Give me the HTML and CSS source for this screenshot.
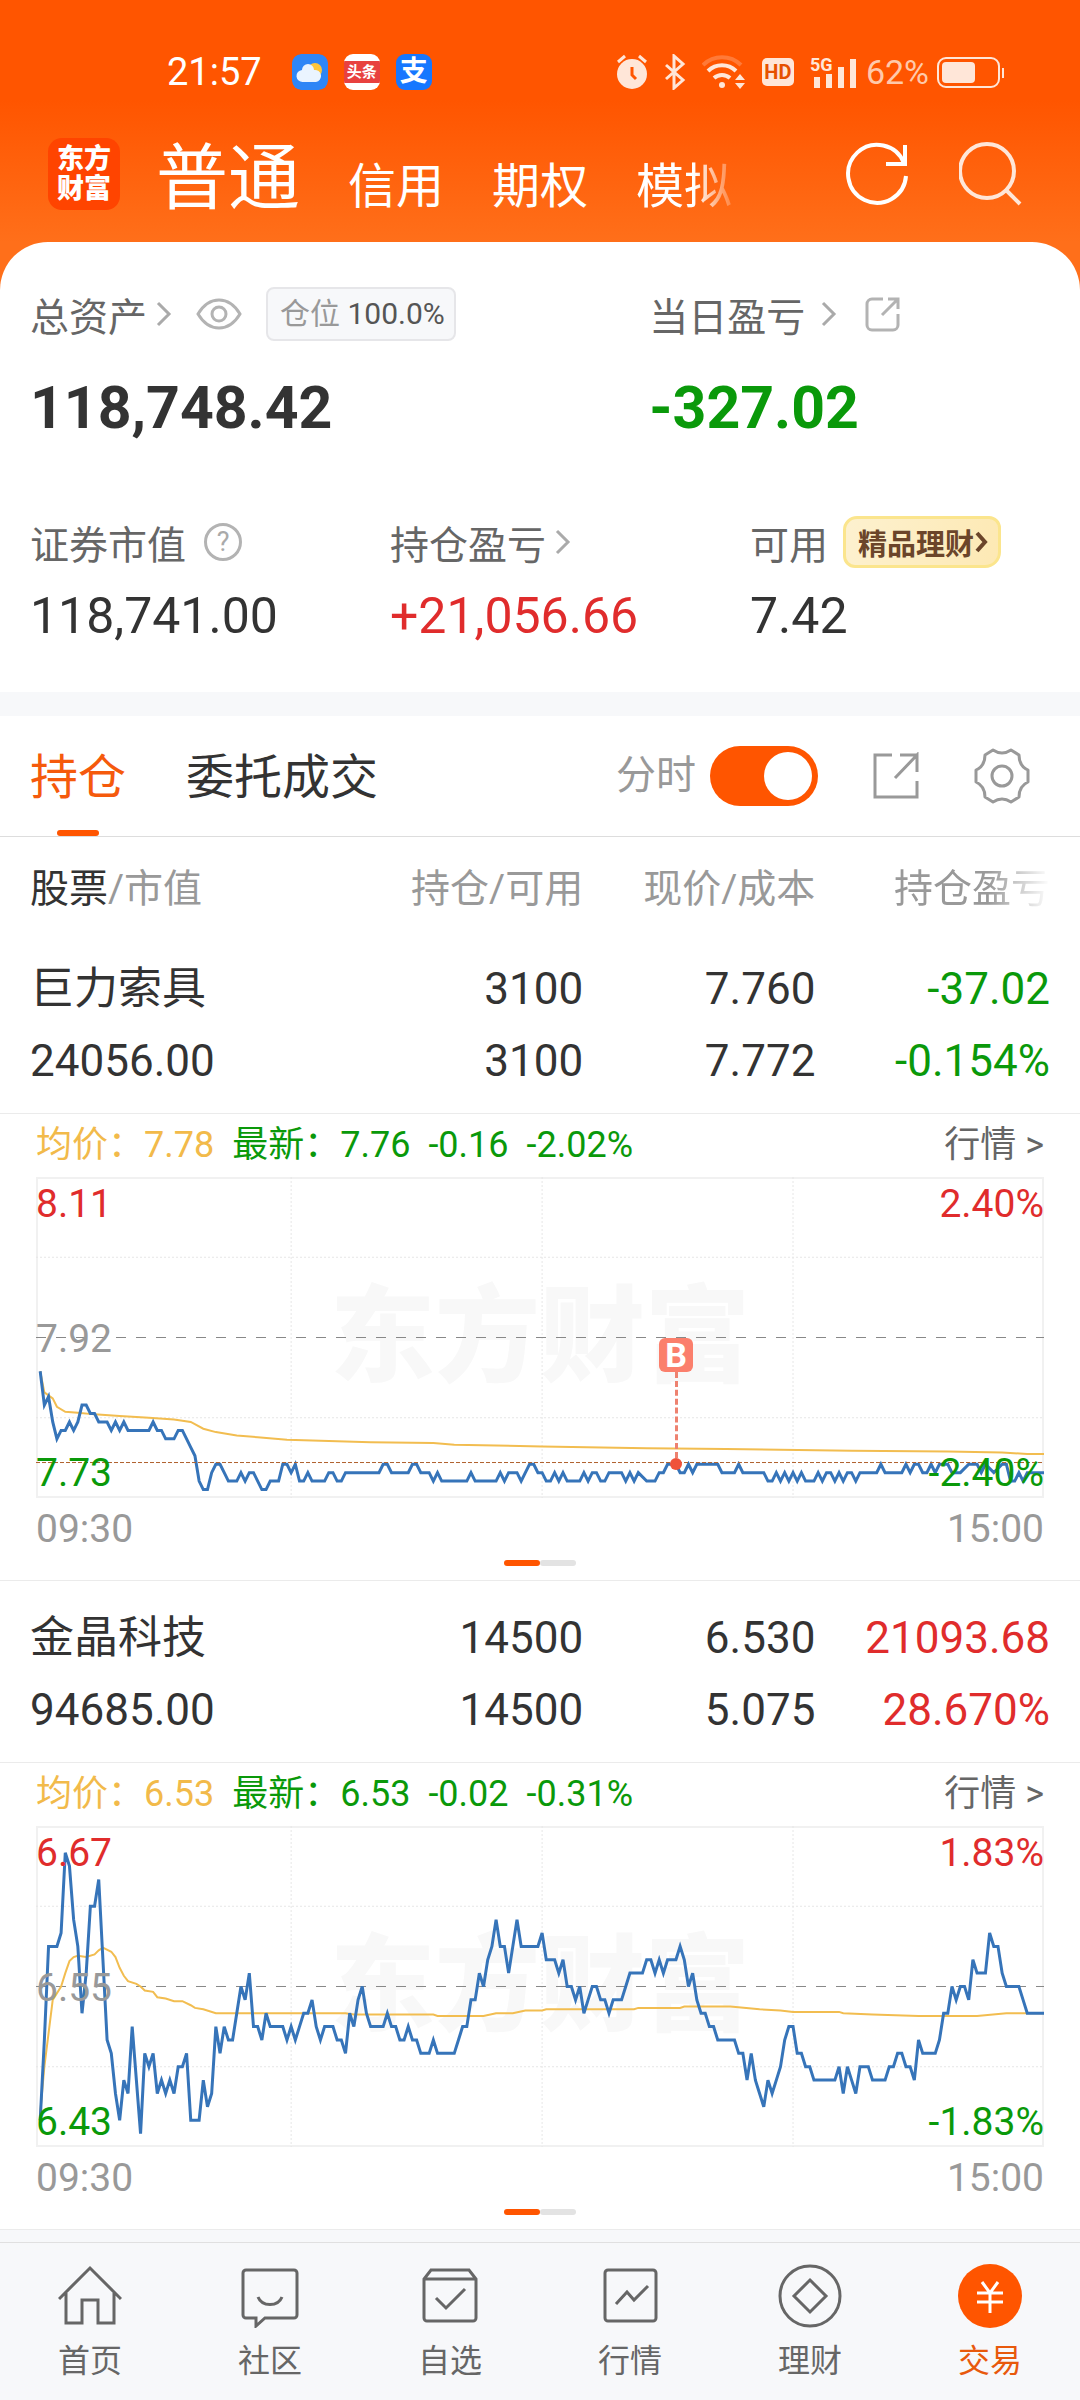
FILE: index.html
```html
<!DOCTYPE html>
<html lang="zh-CN">
<head>
    <meta charset="UTF-8">
    <meta name="viewport" content="width=device-width, initial-scale=1.0">
    <title>东方财富 - 交易</title>
    <link rel="stylesheet" href="styles.css">
</head>
<body>
    <header class="header">
        <!-- Status bar -->
        <div class="status">
            <span class="time">21:57</span>
            <div class="apps">
                <svg class="app" viewBox="0 0 36 36">
                    <rect width="36" height="36" rx="9" fill="#2f86f6"/>
                    <circle cx="23" cy="16" r="7" fill="#ffc53a"/>
                    <path d="M11 28a6 6 0 0 1-1-12 6 6 0 0 1 12 0 6 6 0 0 1 2 12z" fill="#eaf4ff"/>
                </svg>
                <span class="app app-news"><b>头条</b></span>
                <span class="app app-pay">支</span>
            </div>
            <div class="signals">
                <svg width="32" height="36" viewBox="0 0 32 36">
                    <circle cx="16" cy="20" r="15" fill="#ffe6d8"/>
                    <path d="M2 8l7-6M30 8l-7-6" stroke="#ffe6d8" stroke-width="3"/>
                    <path d="M16 13v8l4 4" fill="none" stroke="#ff5500" stroke-width="3"/>
                </svg>
                <svg width="22" height="36" viewBox="0 0 22 36">
                    <path d="M2 11l17 15-9 8V2l9 8L2 25" fill="none" stroke="#ffe6d8" stroke-width="3"/>
                </svg>
                <svg width="44" height="36" viewBox="0 0 44 36">
                    <path d="M1 11a27 27 0 0 1 38 0" fill="none" stroke="#ff7a38" stroke-width="4"/>
                    <path d="M6 17a20 20 0 0 1 28 0M12 24a12 12 0 0 1 16 0" fill="none" stroke="#ffe6d8" stroke-width="4"/>
                    <circle cx="20" cy="31" r="3" fill="#ffe6d8"/>
                    <path d="M33 26l5-6 5 6zM33 29h10l-5 6z" fill="#ffe6d8"/>
                </svg>
                <span class="hd">HD</span>
                <svg width="48" height="36" viewBox="0 0 48 36">
                    <text class="net" x="0" y="17">5G</text>
                    <path d="M7 23v11M19 20v14M31 13v21M43 5v29" stroke="#ffe6d8" stroke-width="6"/>
                </svg>
                <div class="power">
                    <span>62%</span>
                    <svg width="68" height="36" viewBox="0 0 68 36">
                        <rect x="1" y="4" width="61" height="29" rx="8" fill="none" stroke="#ffe6d8" stroke-width="2"/>
                        <rect x="5" y="8" width="33" height="21" rx="4" fill="#ffe6d8"/>
                        <path d="M66 14v10" stroke="#ffe6d8" stroke-width="2"/>
                    </svg>
                </div>
            </div>
        </div>

        <!-- Account navigation -->
        <div class="topbar">
            <a href="#" class="logo">东方<br>财富</a>
            <nav class="accounts">
                <a href="#" class="current">普通</a>
                <a href="#">信用</a>
                <a href="#">期权</a>
                <a href="#" class="faded">模拟</a>
            </nav>
            <div class="actions">
                <button type="button" aria-label="刷新">
                    <svg width="64" height="64" viewBox="0 0 64 64" fill="none" stroke="#fff" stroke-width="4">
                        <path d="M59 21A29 29 0 1 0 61 34"/>
                        <path d="M60 3v19H41"/>
                    </svg>
                </button>
                <button type="button" aria-label="搜索">
                    <svg width="64" height="64" viewBox="0 0 64 64" fill="none" stroke="#ffe6d8" stroke-width="4">
                        <circle cx="28" cy="29" r="27"/>
                        <path d="M47 48l14 14"/>
                    </svg>
                </button>
            </div>
        </div>
    </header>

    <!-- Assets -->
    <section class="assets">
        <div class="totals">
            <div class="asset">
                <div class="label">
                    <a href="#">总资产<svg class="chevron" viewBox="0 0 16 28"><path d="M2 3l11 11L2 25"/></svg></a>
                    <button type="button" class="eye" aria-label="隐藏金额">
                        <svg width="46" height="32" viewBox="0 0 46 32" fill="none" stroke="#b3b3b3" stroke-width="3">
                            <path d="M2 16C8 6 15 2 23 2s15 4 21 14c-6 10-13 14-21 14S8 26 2 16z"/>
                            <circle cx="23" cy="16" r="7"/>
                        </svg>
                    </button>
                    <span class="tag">仓位 <b>100.0%</b></span>
                </div>
                <div class="total">118,748.42</div>
            </div>
            <div class="asset">
                <div class="label">
                    <a href="#">当日盈亏<svg class="chevron wide" viewBox="0 0 16 28"><path d="M2 3l11 11L2 25"/></svg></a>
                    <button type="button" class="share" aria-label="分享">
                        <svg width="36" height="36" viewBox="0 0 36 36" fill="none" stroke="#b3b3b3" stroke-width="3">
                            <path d="M18 3H7a5 5 0 0 0-5 5v21a5 5 0 0 0 5 5h21a5 5 0 0 0 5-5V18"/>
                            <path d="M17 19L33 3M23 3h10v10"/>
                        </svg>
                    </button>
                </div>
                <div class="total green">-327.02</div>
            </div>
        </div>
        <div class="details">
            <div class="asset">
                <div class="label">
                    证券市值
                    <button type="button" class="help" aria-label="说明">?</button>
                </div>
                <div class="amount">118,741.00</div>
            </div>
            <div class="asset">
                <div class="label">
                    <a href="#">持仓盈亏<svg class="chevron" viewBox="0 0 16 28"><path d="M2 3l11 11L2 25"/></svg></a>
                </div>
                <div class="amount red">+21,056.66</div>
            </div>
            <div class="asset">
                <div class="label">
                    可用
                    <a href="#" class="promo">精品理财<svg width="14" height="24" viewBox="0 0 14 24"><path d="M3 3l8 9-8 9" fill="none" stroke="#6b452a" stroke-width="4"/></svg></a>
                </div>
                <div class="amount">7.42</div>
            </div>
        </div>
    </section>

    <!-- Holdings -->
    <section class="holdings">
        <div class="tabs">
            <a href="#" class="tab active">持仓</a>
            <a href="#" class="tab">委托成交</a>
            <div class="tools">
                <label for="minute">分时</label>
                <input type="checkbox" id="minute" class="switch" checked>
                <button type="button" aria-label="分享持仓">
                    <svg width="48" height="48" viewBox="0 0 48 48" fill="none" stroke="#999" stroke-width="3">
                        <path d="M20 3H3v42h42V29M45 20V3L23 26M28 3h17"/>
                    </svg>
                </button>
                <button type="button" class="gear" aria-label="设置">
                    <svg width="56" height="56" viewBox="0 0 56 56" fill="none" stroke="#999" stroke-width="3" stroke-linejoin="round">
                        <path d="M19 2Q28 8 37 2L45 7Q45 18 54 22V34Q45 38 45 49L37 54Q28 48 19 54L11 49Q11 38 2 34V22Q11 18 11 7Z"/>
                        <circle cx="28" cy="28" r="10"/>
                    </svg>
                </button>
            </div>
        </div>

        <table class="positions">
            <thead>
                <tr>
                    <th><b>股票</b>/市值</th>
                    <th>持仓/可用</th>
                    <th>现价/成本</th>
                    <th><span class="fade">持仓盈亏</span></th>
                </tr>
            </thead>
            <tbody>
                <tr class="stock">
                    <td>巨力索具<br>24056.00</td>
                    <td>3100<br>3100</td>
                    <td>7.760<br>7.772</td>
                    <td class="green">-37.02<br>-0.154%</td>
                </tr>
                <tr>
                    <td colspan="4" class="detail">
                        <div class="quote">
                            <span class="yellow">均价：7.78</span>
                            <span class="green">最新：7.76</span>
                            <span class="green">-0.16</span>
                            <span class="green">-2.02%</span>
                            <a href="#">行情 &gt;</a>
                        </div>
                        <div class="chart">
                            <span class="watermark">东方财富</span>
                            <svg class="plot" viewBox="0 0 241 38" preserveAspectRatio="none">
                                <path class="grid" d="M0 9.5H241M0 28.5H241M61 0V38M121 0V38M181 0V38"/>
                                <path class="middle" d="M0 19H241"/>
                                <polyline class="average" points="1,23 2,25.5 4,26.2 5,27.2 7,27.8 10,27.9 14,28.1 20,28.3 27,28.5 33,28.7 37,29 40,29.8 43,30.2 48,30.6 53,30.8 60,31.1 80,31.4 95,31.5 100,31.7 121,31.9 146,32.1 165,32.2 195,32.4 218,32.5 231,32.6 237,32.8 241,32.8"/>
                                <polyline class="price" points="1,23 2,27 3,26 4,29 5,31 6,30 7,30 8,29 9,30 10,29 11,27 12,27 13,28 14,28 15,29 17,29 18,30 19,29 20,30 21,29 22,30 27,30 28,29 29,30 30,30 31,31 33,31 34,30 35,30 36,31 37,32 38,33 39,36 40,37 41,37 42,35 43,34 44,34 45,35 46,36 48,36 49,35 50,36 51,35 52,35 53,36 54,37 55,37 56,36 58,36 59,34 60,34 61,35 62,34 63,36 64,36 65,35 66,36 69,36 70,35 71,35 72,36 73,36 74,35 82,35 83,34 84,34 85,35 89,35 90,34 91,34 92,35 94,35 95,36 96,35 97,36 103,36 104,35 105,36 110,36 111,35 112,36 113,35 115,35 116,36 117,35 118,34 119,34 120,35 121,35 122,36 123,36 124,35 125,36 126,35 127,36 130,36 131,35 132,36 133,35 134,35 135,36 136,36 137,35 140,35 141,36 142,35 143,36 144,35 146,36 148,36 149,35 150,35 151,34 153,34 154,35 155,35 156,34 157,35 158,34 163,34 164,35 167,35 168,34 169,35 174,35 175,36 176,36 177,35 178,36 179,35 180,36 181,35 182,36 183,35 184,36 186,36 187,35 188,36 189,35 190,35 191,36 192,35 193,36 194,35 195,35 196,36 197,35 201,35 202,34 203,35 207,35 208,34 209,35 210,34 211,34 212,35 213,35 214,34 215,35 216,34 218,34 219,35 221,35 223,34 225,34 226,35 227,34 229,35 231,34 232,34 233,36 234,36 235,35 236,36 237,35 241,35"/>
                                <path class="last" d="M0 33.8H241"/>
                            </svg>
                            <div class="trade"><b>B</b><i class="stem"></i><i class="dot"></i></div>
                            <div class="scale">
                                <span class="red">8.11</span><span>7.92</span><span class="green">7.73</span>
                            </div>
                            <div class="scale right">
                                <span class="red">2.40%</span><span class="green">-2.40%</span>
                            </div>
                        </div>
                        <div class="hours"><span>09:30</span><span>15:00</span></div>
                        <div class="pager"><i class="on"></i><i></i></div>
                    </td>
                </tr>
                <tr class="stock">
                    <td>金晶科技<br>94685.00</td>
                    <td>14500<br>14500</td>
                    <td>6.530<br>5.075</td>
                    <td class="red">21093.68<br>28.670%</td>
                </tr>
                <tr>
                    <td colspan="4" class="detail">
                        <div class="quote">
                            <span class="yellow">均价：6.53</span>
                            <span class="green">最新：6.53</span>
                            <span class="green">-0.02</span>
                            <span class="green">-0.31%</span>
                            <a href="#">行情 &gt;</a>
                        </div>
                        <div class="chart">
                            <span class="watermark">东方财富</span>
                            <svg class="plot" viewBox="0 0 241 24" preserveAspectRatio="none">
                                <path class="grid" d="M0 6H241M0 18H241M61 0V24M121 0V24M181 0V24"/>
                                <path class="middle" d="M0 12H241"/>
                                <polyline class="average" points="1,21.5 2,18 3,15.5 4,13 6,12 7,11 8,10.1 9,9.8 10,9.7 12,9.8 14,9.6 15,9.3 16,9.1 18,9.4 19,9.8 20,10.6 21,11.2 22,11.6 24,11.8 25,12 26,12.3 28,12.4 29,12.8 31,12.9 33,13.1 35,13.1 37,13.4 38,13.6 40,13.7 43,14 74,14 76,14.1 95,14.1 96,14.2 107,14.2 110,14 114,14 117,13.8 121,13.8 122,13.7 143,13.7 144,13.6 154,13.6 155,13.5 166,13.5 173,13.7 178,13.8 181,13.9 192,13.9 193,14 200,14.1 211,14.2 225,14.2 232,14 241,14"/>
                                <polyline class="price" points="1,22 2,16 3,9 5,9 6,8 7,2 8,3 9,7 10,9 11,14 12,11 13,6 14,6 15,4 16,10 17,16 18,17 19,20 20,22 21,19 22,20 23,15 24,19 25,23 26,17 27,18 28,17 29,20 30,19 31,20 32,19 33,20 34,18 35,18 36,17 37,22 39,22 40,19 41,21 42,20 43,15 44,17 45,15 46,16 47,16 48,14 49,12 50,13 51,11 52,15 53,15 54,16 55,14 56,15 59,15 60,16 61,15 62,16 63,15 64,14 65,14 66,13 67,15 68,16 69,15 71,15 72,16 73,16 74,17 75,14 76,15 77,13 78,12 79,14 80,15 83,15 84,14 85,15 86,15 87,16 88,16 89,15 90,16 91,16 92,17 94,17 95,16 96,17 100,17 101,16 102,15 103,15 104,13 105,13 106,11 107,12 108,10 109,9 110,7 111,9 112,9 113,11 114,9 115,7 116,9 120,9 121,8 122,10 124,10 125,11 126,10 127,12 128,12 129,13 130,12 131,14 132,13 133,12 134,12 135,13 136,13 137,14 138,13 140,13 141,12 142,11 145,11 146,10 147,10 148,11 149,10 150,11 151,10 153,10 154,9 155,10 156,12 157,11 158,13 159,14 160,14 161,15 162,15 163,16 167,16 168,17 169,17 170,19 171,17 172,19 173,20 174,21 175,19 176,20 177,19 178,18 179,16 180,15 181,15 182,17 183,17 184,18 185,18 186,19 191,19 192,18 193,20 194,18 195,19 196,20 197,18 199,18 200,19 203,19 204,18 205,18 206,17 207,17 208,18 209,18 210,19 211,16 212,17 215,17 216,16 217,14 218,14 219,12 220,13 221,12 222,12 223,13 224,10 225,11 227,11 228,8 229,9 230,9 231,11 232,12 235,12 236,13 237,14 241,14"/>
                            </svg>
                            <div class="scale">
                                <span class="red">6.67</span><span>6.55</span><span class="green">6.43</span>
                            </div>
                            <div class="scale right">
                                <span class="red">1.83%</span><span class="green">-1.83%</span>
                            </div>
                        </div>
                        <div class="hours"><span>09:30</span><span>15:00</span></div>
                        <div class="pager"><i class="on"></i><i></i></div>
                    </td>
                </tr>
            </tbody>
        </table>
    </section>

    <!-- Bottom navigation -->
    <nav class="tabbar">
        <a href="#">
            <svg viewBox="0 0 64 64"><path d="M1 35L32 4l31 31M8 29v30h16V36h16v23h16V29"/></svg>
            首页
        </a>
        <a href="#">
            <svg viewBox="0 0 64 64"><path d="M8 6h48a3 3 0 0 1 3 3v42a3 3 0 0 1-3 3H27l-9 8v-8H8a3 3 0 0 1-3-3V9a3 3 0 0 1 3-3z"/><path d="M20 33c4 10 20 10 24 0"/></svg>
            社区
        </a>
        <a href="#">
            <svg viewBox="0 0 64 64"><path d="M13 6h38l7 9v39a3 3 0 0 1-3 3H9a3 3 0 0 1-3-3V15zM6 15h52M18 34l10 10 19-19"/></svg>
            自选
        </a>
        <a href="#">
            <svg viewBox="0 0 64 64"><rect x="7" y="6" width="51" height="51" rx="3"/><path d="M18 40l11-12 7 8 14-14"/></svg>
            行情
        </a>
        <a href="#">
            <svg viewBox="0 0 64 64"><circle cx="32" cy="32" r="30"/><path d="M32 16l16 16-16 16-16-16z"/></svg>
            理财
        </a>
        <a href="#" class="active">
            <svg viewBox="0 0 64 64"><circle cx="32" cy="32" r="32" fill="#ff5500" stroke="none"/><path d="M24 18l8 11 8-11M19 29h26M19 38h26M32 29v20" stroke="#fff"/></svg>
            交易
        </a>
    </nav>
</body>
</html>
```
FILE: styles.css
```css
/* Basic reset and styles */
* {
    margin: 0;
    padding: 0;
    box-sizing: border-box;
}

body {
    font-family: Roboto, "Noto Sans CJK SC", sans-serif;
    color: #333;
    background-color: #f7f8fa;
}

a {
    color: inherit;
    text-decoration: none;
}

button {
    background: none;
    border: none;
    font-family: inherit;
}

svg {
    display: block;
    flex: none;
}

.red {
    color: #e02c2c;
}

.green {
    color: #0a990a;
}

.yellow {
    color: #f2ba4a;
}

/* Header styles */
.header {
    height: 290px;
    background: linear-gradient(#ff5500 100px, #ff6f1a 242px);
    color: #fff;
}

.status {
    display: flex;
    align-items: center;
    padding: 54px 75px 0 167px;
    height: 90px;
}

.time {
    font-size: 38px;
}

.apps {
    display: flex;
    gap: 16px;
    margin-left: 30px;
}

.app {
    width: 36px;
    height: 36px;
    border-radius: 9px;
    overflow: hidden;
}

.app-news {
    background-color: #fff;
    padding: 7px 0;
}

.app-news b {
    display: block;
    background-color: #e8413f;
    font-size: 15px;
    line-height: 22px;
    text-align: center;
}

.app-pay {
    background-color: #1677ff;
    font-size: 28px;
    font-weight: bold;
    line-height: 36px;
    text-align: center;
}

.signals {
    display: flex;
    align-items: center;
    gap: 16px;
    margin-left: auto;
    color: #ffe6d8;
}

.hd {
    width: 32px;
    border-radius: 5px;
    background-color: #ffe6d8;
    color: #e65100;
    font-size: 20px;
    font-weight: bold;
    line-height: 28px;
    text-align: center;
}

.net {
    font-size: 18px;
    font-weight: bold;
    fill: #ffe6d8;
}

.power {
    display: flex;
    align-items: center;
    gap: 8px;
    margin-left: -8px;
    font-size: 34px;
    color: #ffc9ab;
}

.topbar {
    display: flex;
    align-items: center;
    padding: 0 57px 0 48px;
    height: 168px;
}

.logo {
    width: 72px;
    height: 72px;
    padding-top: 6px;
    border-radius: 14px;
    background-color: #ff4400;
    font-size: 27px;
    font-weight: 900;
    line-height: 30px;
    text-align: center;
}

.accounts {
    display: flex;
    align-items: baseline;
    gap: 48px;
    margin-left: 36px;
    padding-bottom: 6px;
    font-size: 48px;
}

.accounts .current {
    font-size: 72px;
}

.faded {
    -webkit-mask-image: linear-gradient(90deg, #000 60%, transparent 110%);
    mask-image: linear-gradient(90deg, #000 60%, transparent 110%);
}

.actions {
    display: flex;
    gap: 50px;
    margin-left: auto;
}

/* Assets card */
.assets {
    margin-top: -48px;
    padding: 45px 30px 40px;
    border-radius: 48px 48px 0 0;
    background-color: #fff;
}

.totals {
    display: grid;
    grid-template-columns: 17fr 11fr;
}

.details {
    display: grid;
    grid-template-columns: 6fr 6fr 5fr;
    margin-top: 71px;
}

.label,
.label a {
    display: flex;
    align-items: center;
}

.label {
    height: 54px;
    font-size: 39px;
    color: #666;
}

.chevron {
    width: 16px;
    height: 28px;
    margin-left: 9px;
    fill: none;
    stroke: #aaa;
    stroke-width: 3;
}

.chevron.wide {
    margin-left: 16px;
}

.eye {
    margin-left: 24px;
}

.share {
    margin-left: 28px;
}

.tag {
    margin-left: 24px;
    padding: 0 9px 0 12px;
    border: 2px solid #e6e6e9;
    border-radius: 8px;
    background-color: #f7f8fa;
    font-size: 30px;
    line-height: 50px;
    color: #999;
}

.tag b {
    font-weight: normal;
    color: #555;
}

.total {
    margin-top: 31px;
    font-size: 59px;
    font-weight: bold;
    line-height: 72px;
}

.amount {
    margin-top: 11px;
    font-size: 50px;
    line-height: 72px;
}

.help {
    width: 38px;
    height: 38px;
    margin-left: 18px;
    border: 3px solid #b3b3b3;
    border-radius: 50%;
    font-size: 27px;
    line-height: 32px;
    color: #aaa;
}

.label .promo {
    height: 52px;
    margin-left: 15px;
    padding: 0 10px 0 12px;
    border: 3px solid #fbe58d;
    border-radius: 14px 12px 16px 12px;
    background: linear-gradient(100deg, #fdf1cf, #fde9b4);
    font-size: 29px;
    font-weight: bold;
    color: #6b452a;
}

/* Holdings tabs */
.holdings {
    margin-top: 24px;
    background-color: #fff;
}

.tabs {
    display: flex;
    gap: 60px;
    padding: 0 50px 0 30px;
    border-bottom: 1px solid #ddd;
    font-size: 48px;
    line-height: 116px;
}

.tab {
    padding-top: 4px;
}

.tab.active {
    position: relative;
    color: #f55a0c;
}

.tab.active::after {
    content: "";
    position: absolute;
    left: 50%;
    bottom: 0;
    width: 42px;
    height: 6px;
    margin-left: -21px;
    border-radius: 3px;
    background-color: #ff5500;
}

.tools {
    display: flex;
    align-items: center;
    margin-left: auto;
    font-size: 40px;
    color: #999;
}

.tools button {
    margin-left: 54px;
}

.switch {
    appearance: none;
    width: 108px;
    height: 60px;
    margin-left: 14px;
    padding: 6px;
    border-radius: 30px;
    background-color: #ff5500;
}

.switch::before {
    content: "";
    display: block;
    width: 48px;
    height: 48px;
    margin-left: auto;
    border-radius: 50%;
    background-color: #fff;
}

/* Positions table */
.positions {
    width: 100%;
    border-collapse: collapse;
    table-layout: fixed;
}

.positions th {
    width: 27%;
    height: 95px;
    font-size: 39px;
    font-weight: normal;
    text-align: right;
    color: #999;
}

.positions th:nth-child(3) {
    width: 21.5%;
}

.positions th:nth-child(4) {
    width: 24.5%;
}

.positions th b {
    font-weight: normal;
    color: #333;
}

.positions th:first-child,
.stock td:first-child {
    padding-left: 30px;
    text-align: left;
}

.positions th:last-child,
.stock td:last-child {
    padding-right: 30px;
}

.fade {
    -webkit-mask-image: linear-gradient(90deg, #000 60%, transparent);
    mask-image: linear-gradient(90deg, #000 60%, transparent);
}

.stock td {
    padding: 21px 0 16px;
    font-size: 44px;
    line-height: 72px;
    text-align: right;
}

.detail {
    padding: 0 36px 14px;
    border-top: 1px solid #ebebeb;
    border-bottom: 1px solid #ebebeb;
}

.quote {
    display: flex;
    gap: 18px;
    font-size: 36px;
    line-height: 63px;
}

.quote a {
    margin-left: auto;
    color: #666;
}

/* Intraday chart */
.chart {
    position: relative;
    height: 321px;
    box-shadow: inset 0 0 0 2px #f1f1f1;
}

.watermark {
    position: absolute;
    inset: 0;
    font-size: 105px;
    font-weight: 900;
    line-height: 322px;
    text-align: center;
    color: #f8f8f8;
}

.plot {
    position: relative;
    width: 100%;
    height: 100%;
}

.plot * {
    fill: none;
    vector-effect: non-scaling-stroke;
}

.grid {
    stroke: #e6e6e6;
    stroke-dasharray: 2 2;
}

.middle {
    stroke: #888;
    stroke-dasharray: 10 10;
}

.average {
    stroke: #f2bd50;
    stroke-width: 2;
}

.price {
    stroke: #3674b9;
    stroke-width: 3;
}

.last {
    stroke: #b0622e;
    stroke-dasharray: 4 2;
}

.scale {
    position: absolute;
    inset: 3px 0 0;
    display: flex;
    flex-direction: column;
    justify-content: space-between;
    font-size: 39px;
    line-height: 49px;
    color: #999;
}

.scale.right {
    text-align: right;
}

.trade {
    position: absolute;
    left: 63.5%;
    top: 50%;
    display: flex;
    flex-direction: column;
    align-items: center;
    width: 34px;
    margin-left: -17px;
}

.trade b {
    width: 34px;
    border-radius: 6px;
    background-color: #fb7f6c;
    font-size: 34px;
    line-height: 34px;
    text-align: center;
    color: #fff;
}

.stem {
    height: 86px;
    border-left: 3px dashed #ee8270;
}

.dot {
    width: 12px;
    height: 12px;
    border-radius: 50%;
    background-color: #f0523a;
}

.hours {
    display: flex;
    justify-content: space-between;
    font-size: 39px;
    line-height: 62px;
    color: #999;
}

.pager {
    display: flex;
    justify-content: center;
}

.pager i {
    width: 36px;
    height: 6px;
    border-radius: 3px;
    background-color: #e3e3e3;
}

.pager .on {
    background-color: #ff5500;
}

/* Bottom navigation */
.tabbar {
    display: grid;
    grid-template-columns: repeat(6, 1fr);
    margin-top: 12px;
    padding: 21px 0 20px;
    border-top: 1px solid #e0e0e0;
    font-size: 32px;
    line-height: 36px;
    color: #666;
}

.tabbar a {
    display: flex;
    flex-direction: column;
    align-items: center;
    gap: 15px;
}

.tabbar svg {
    width: 64px;
    height: 64px;
    fill: none;
    stroke: #666;
    stroke-width: 3;
}

.tabbar .active {
    color: #e8590c;
}
```
